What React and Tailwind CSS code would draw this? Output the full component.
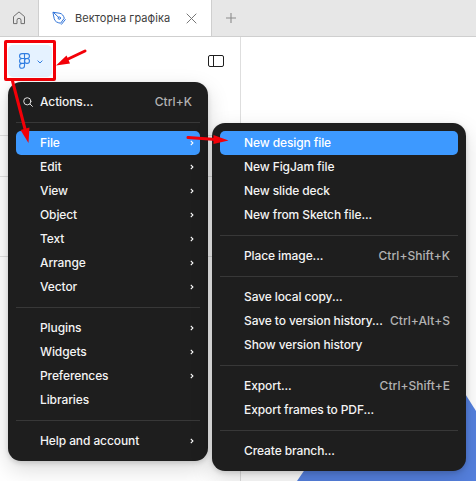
import React from 'react';

const mainMenu = [
  [{ label: 'Actions...', shortcut: 'Ctrl+K', search: true }],
  [
    { label: 'File', arrow: true, active: true },
    { label: 'Edit', arrow: true },
    { label: 'View', arrow: true },
    { label: 'Object', arrow: true },
    { label: 'Text', arrow: true },
    { label: 'Arrange', arrow: true },
    { label: 'Vector', arrow: true },
  ],
  [
    { label: 'Plugins', arrow: true },
    { label: 'Widgets', arrow: true },
    { label: 'Preferences', arrow: true },
    { label: 'Libraries' },
  ],
  [{ label: 'Help and account', arrow: true }],
];

const fileMenu = [
  [
    { label: 'New design file', active: true },
    { label: 'New FigJam file' },
    { label: 'New slide deck' },
    { label: 'New from Sketch file...' },
  ],
  [{ label: 'Place image...', shortcut: 'Ctrl+Shift+K' }],
  [
    { label: 'Save local copy...' },
    { label: 'Save to version history...', shortcut: 'Ctrl+Alt+S' },
    { label: 'Show version history' },
  ],
  [
    { label: 'Export...', shortcut: 'Ctrl+Shift+E' },
    { label: 'Export frames to PDF...' },
  ],
  [{ label: 'Create branch...' }],
];

const MenuItem = ({ item }) => (
  <div
    className={`flex h-6 items-center rounded-[5px] pr-2 ${
      item.active ? 'bg-[#3d99ff] text-white' : 'text-[#f4f4f4]'
    }`}
  >
    <span className="flex w-6 shrink-0 items-center pl-[7px]">
      {item.search && (
        <svg width="10" height="10" viewBox="0 0 10 10" fill="none" stroke="#dedede" strokeLinecap="round">
          <circle cx="4.3" cy="4.3" r="3.6" />
          <path d="M7 7l2.4 2.4" />
        </svg>
      )}
    </span>
    <span className="grow whitespace-nowrap">{item.label}</span>
    {item.shortcut && <span className="whitespace-nowrap tracking-[0.04px] text-[#b2b2b2]">{item.shortcut}</span>}
    {item.arrow && (
      <svg className="mr-[-4px]" width="6" height="8" viewBox="0 0 6 8" fill="none" stroke="#fff" strokeWidth="1.1">
        <path d="M0.8 1.9L2.9 4L0.8 6.1" />
      </svg>
    )}
  </div>
);

const Menu = ({ groups }) => (
  <div className="rounded-[13px] bg-[#1e1e1e] p-2 text-[12px] font-medium tracking-[-0.1px] shadow-[0_8px_22px_rgba(0,0,0,0.15),0_2px_5px_rgba(0,0,0,0.15)]">
    {groups.map((group, i) => (
      <div key={i}>
        {i > 0 && <div className="my-2 h-px bg-[#383838]" />}
        {group.map((item) => (
          <MenuItem key={item.label} item={item} />
        ))}
      </div>
    ))}
  </div>
);

const TabBar = () => (
  <div className="flex h-[37px] border-b border-[#cfcfcf] bg-[#e7e7e7]">
    <div className="flex w-[39px] items-center justify-center border-r border-[#cfcfcf]">
      <svg width="14" height="14" viewBox="0 0 14 14" fill="none" stroke="#6e6e6e" strokeLinejoin="round">
        <path d="M1.5 5.6L7 0.9l5.5 4.7v7H9V9.3a2 2 0 0 0-4 0v3.3H1.5z" />
      </svg>
    </div>
    <div className="flex w-[173px] items-center border-r border-[#cfcfcf] bg-white pl-[13px]">
      <svg className="shrink-0" width="14" height="14" viewBox="0 0 14 14" fill="none" stroke="#2f73d9" strokeLinejoin="round" strokeLinecap="round">
        <path d="M1.300 1.300L8 2.300c2.200.6 3.500 2.300 4.300 4.900L8.600 12.200C5.300 11.700 2.900 10.600 2.300 8.100z" />
        <path d="M1.300 1.300l5.200 5M9.500 13.300l3.800-4.700" />
        <circle cx="7.3" cy="7.1" r="1.2" />
      </svg>
      <span className="ml-[9px] w-[111px] shrink-0 whitespace-nowrap text-[11px] tracking-[0.08px] text-[#3d3d3d]">
        Векторна графіка
      </span>
      <svg className="shrink-0" width="11" height="11" viewBox="0 0 11 11" stroke="#777" fill="none">
        <path d="M0.700 0.700l9.600 9.600M10.300 0.700l-9.600 9.600" />
      </svg>
    </div>
    <div className="flex w-[38px] items-center justify-center">
      <svg width="10" height="10" viewBox="0 0 10 10" stroke="#8c8c8c" fill="none" strokeWidth="1.1">
        <path d="M5 0v10M0 5h10" />
      </svg>
    </div>
  </div>
);

const Sidebar = () => (
  <div className="flex w-[241px] flex-col border-r border-[#dedede] bg-white">
    <div className="flex h-[98px] items-start justify-between pr-4">
      <div className="ml-1 mt-[3px] h-[41px] w-[52px] rounded-[2px] border-[3px] border-[#f30008] bg-white">
        <div className="ml-px mt-[2px] flex h-8 w-[44px] items-center rounded-[5px] bg-[#e5f2ff] pl-[11px]">
          <svg width="11" height="16" viewBox="0 0 11 16" fill="none" stroke="#2f7de1" strokeWidth="1.1">
            <path d="M5.500.600H3a2.450 2.450 0 0 0 0 4.900h2.500zM5.500.600H8a2.450 2.450 0 0 1 0 4.900H5.500zM5.500 5.500H3a2.450 2.450 0 0 0 0 4.900h2.500zM5.500 10.400H3a2.450 2.450 0 1 0 2.500 2.450z" />
            <circle cx="8" cy="7.950" r="2.450" />
          </svg>
          <svg className="ml-[7px] mt-px" width="6" height="4" viewBox="0 0 6 4" fill="none" stroke="#2f7de1">
            <path d="M0.600 0.600L3 3l2.400-2.400" />
          </svg>
        </div>
      </div>
      <svg className="mt-[18px]" width="16" height="12" viewBox="0 0 16 12" fill="none" stroke="#1f1f1f">
        <rect x="0.500" y="0.500" width="15" height="11" rx="1.500" />
        <path d="M5.500 0.500v11" />
      </svg>
    </div>
    <div className="h-[42px] border-y border-[#e2e2e2]" />
    <div className="h-[80px] border-b border-[#e2e2e2]" />
  </div>
);

// hand drawn markers that point at the opened items
const Annotations = () => (
  <svg className="absolute left-0 top-0" width="476" height="481" viewBox="0 0 476 481" fill="none">
    <g stroke="#f30008" strokeWidth="3" strokeLinecap="round">
      <path d="M85 51L66 60" />
      <path d="M12.500 81L25 129" />
      <path d="M188 137.500L216 139.500" />
    </g>
    <g fill="#f30008">
      <path d="M56 65.500L66.500 55.500L70 63.500z" />
      <path d="M28.500 143L20.500 130L29.500 127.500z" />
      <path d="M228.500 140.500L213.500 144V135z" />
    </g>
  </svg>
);

const App = () => {
  return (
    <div className="relative h-[481px] w-[476px] overflow-hidden bg-white font-['Inter',sans-serif]">
      <div className="flex h-full flex-col">
        <TabBar />
        <div className="flex grow">
          <Sidebar />
          <div className="relative grow overflow-hidden bg-white">
            <svg className="absolute bottom-0 right-0" width="235" height="100" viewBox="0 0 235 100">
              <path d="M56 100L125 0H216L235 30V100z" fill="#5581df" />
            </svg>
          </div>
        </div>
      </div>

      <div className="absolute left-2 top-[82px] w-[200px]">
        <Menu groups={mainMenu} />
      </div>
      <div className="absolute left-[212px] top-[123px] w-[254px]">
        <Menu groups={fileMenu} />
      </div>
      <Annotations />
    </div>
  );
};

export default App;
